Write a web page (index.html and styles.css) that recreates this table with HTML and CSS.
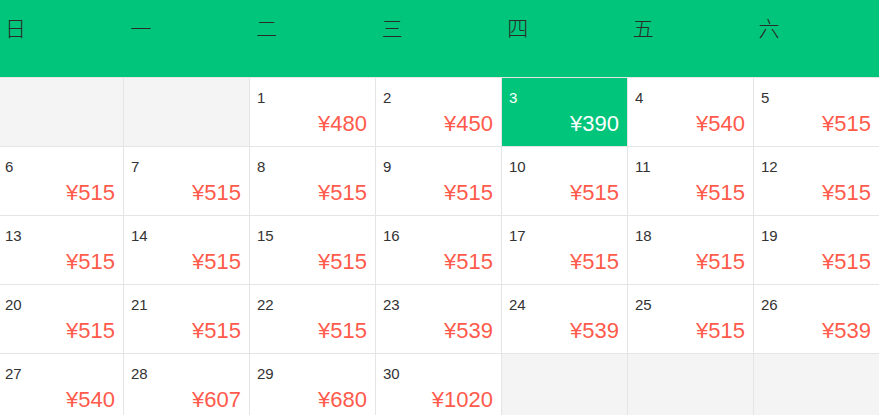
FILE: index.html
```html
<!DOCTYPE html>
<html lang="zh-CN">
<head>
<meta charset="utf-8">
<title>价格日历</title>
<link rel="stylesheet" href="styles.css">
</head>
<body>
<div class="calendar">
  <div class="week">
    <div class="wd">日</div><div class="wd">一</div><div class="wd">二</div><div class="wd">三</div><div class="wd">四</div><div class="wd">五</div><div class="wd">六</div>
  </div>
  <div class="days">
    <div class="day empty"></div>
    <div class="day empty"></div>
    <div class="day"><span class="num">1</span><span class="price">¥480</span></div>
    <div class="day"><span class="num">2</span><span class="price">¥450</span></div>
    <div class="day active"><span class="num">3</span><span class="price">¥390</span></div>
    <div class="day"><span class="num">4</span><span class="price">¥540</span></div>
    <div class="day"><span class="num">5</span><span class="price">¥515</span></div>

    <div class="day"><span class="num">6</span><span class="price">¥515</span></div>
    <div class="day"><span class="num">7</span><span class="price">¥515</span></div>
    <div class="day"><span class="num">8</span><span class="price">¥515</span></div>
    <div class="day"><span class="num">9</span><span class="price">¥515</span></div>
    <div class="day"><span class="num">10</span><span class="price">¥515</span></div>
    <div class="day"><span class="num">11</span><span class="price">¥515</span></div>
    <div class="day"><span class="num">12</span><span class="price">¥515</span></div>

    <div class="day"><span class="num">13</span><span class="price">¥515</span></div>
    <div class="day"><span class="num">14</span><span class="price">¥515</span></div>
    <div class="day"><span class="num">15</span><span class="price">¥515</span></div>
    <div class="day"><span class="num">16</span><span class="price">¥515</span></div>
    <div class="day"><span class="num">17</span><span class="price">¥515</span></div>
    <div class="day"><span class="num">18</span><span class="price">¥515</span></div>
    <div class="day"><span class="num">19</span><span class="price">¥515</span></div>

    <div class="day"><span class="num">20</span><span class="price">¥515</span></div>
    <div class="day"><span class="num">21</span><span class="price">¥515</span></div>
    <div class="day"><span class="num">22</span><span class="price">¥515</span></div>
    <div class="day"><span class="num">23</span><span class="price">¥539</span></div>
    <div class="day"><span class="num">24</span><span class="price">¥539</span></div>
    <div class="day"><span class="num">25</span><span class="price">¥515</span></div>
    <div class="day"><span class="num">26</span><span class="price">¥539</span></div>

    <div class="day"><span class="num">27</span><span class="price">¥540</span></div>
    <div class="day"><span class="num">28</span><span class="price">¥607</span></div>
    <div class="day"><span class="num">29</span><span class="price">¥680</span></div>
    <div class="day"><span class="num">30</span><span class="price">¥1020</span></div>
    <div class="day empty"></div>
    <div class="day empty"></div>
    <div class="day empty"></div>
  </div>
</div>
</body>
</html>
```
FILE: styles.css
```css
html, body {
  margin: 0;
  padding: 0;
  background: #ffffff;
  overflow: hidden;
}

.calendar {
  width: 879px;
  font-family: "Liberation Sans", Arial, "Noto Sans CJK SC", sans-serif;
  color: #333333;
}

.week {
  display: grid;
  grid-template-columns: repeat(7, 1fr);
  height: 77px;
  background: #00c57a;
}

.wd {
  padding: 12px 0 0 5px;
  font-family: "Noto Sans CJK SC", sans-serif;
  font-weight: 300;
  font-size: 21px;
  line-height: 30px;
  color: #2b2b2b;
}

.days {
  display: grid;
  grid-template-columns: repeat(7, 126px);
  margin-left: -2px;
  border-top: 1px solid #e5e5e5;
}

.day {
  box-sizing: border-box;
  height: 69px;
  display: flex;
  flex-direction: column;
  padding: 10px 8px 0 7px;
  border-right: 1px solid #e5e5e5;
  border-bottom: 1px solid #e5e5e5;
  background: #ffffff;
}

.day.empty {
  background: #f4f4f4;
}

.day.active {
  background: #00c57a;
  color: #ffffff;
}

.num {
  font-size: 15px;
  line-height: 20px;
}

.price {
  margin-top: 4px;
  align-self: flex-end;
  font-size: 22px;
  line-height: 24px;
  color: #ff5a4b;
}

.day.active .price {
  color: #ffffff;
}
```
